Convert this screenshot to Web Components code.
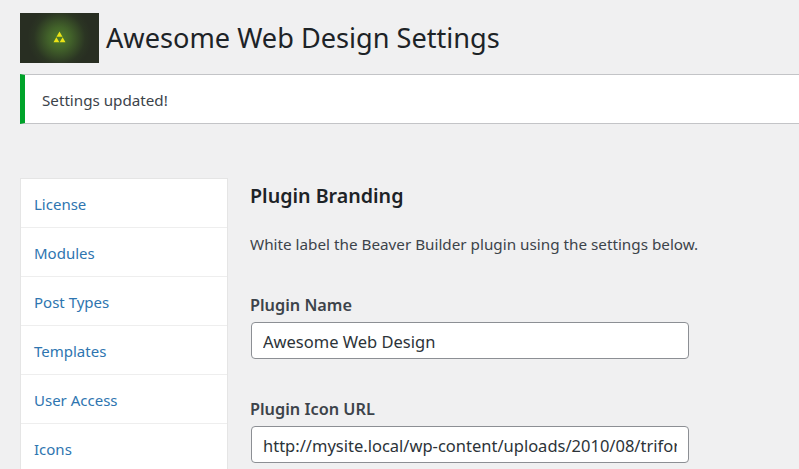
<!DOCTYPE html>
<html lang="en">
<head>
<meta charset="utf-8">
<title>Awesome Web Design Settings</title>
<style>
  html, body { margin: 0; height: 100%; overflow: hidden; }
  body {
    background: #f0f0f1;
    color: #3c434a;
    font-family: "Noto Sans", "Open Sans", sans-serif;
  }
</style>
</head>
<body>
<settings-page>
  <settings-header slot="header">Awesome Web Design Settings</settings-header>
  <settings-notice slot="notice">Settings updated!</settings-notice>
  <settings-nav slot="nav">
    <nav-item>License</nav-item>
    <nav-item>Modules</nav-item>
    <nav-item>Post Types</nav-item>
    <nav-item>Templates</nav-item>
    <nav-item>User Access</nav-item>
    <nav-item>Icons</nav-item>
  </settings-nav>
  <h3-block slot="main" heading="Plugin Branding">White label the Beaver Builder plugin using the settings below.</h3-block>
  <text-field slot="main" label="Plugin Name" value="Awesome Web Design"></text-field>
  <text-field slot="main" label="Plugin Icon URL" value="http://mysite.local/wp-content/uploads/2010/08/triforce.png"></text-field>
</settings-page>

<script>
(() => {
  // Small helper so each element just declares its own template
  const define = (name, html, Base = HTMLElement) => {
    const template = document.createElement('template');
    template.innerHTML = html;
    customElements.define(name, class extends Base {
      constructor() {
        super();
        this.attachShadow({ mode: 'open' });
        this.shadowRoot.appendChild(template.content.cloneNode(true));
      }
    });
  };

  define('settings-page', `
  <style>
    :host { display: block; padding-top: 13px; }
    .body {
      display: flex;
      align-items: flex-start;
      gap: 22px;
      margin: 54px 0 0 20px;
    }
    .main { width: 460px; flex: none; }
  </style>
  <slot name="header"></slot>
  <slot name="notice"></slot>
  <div class="body">
    <slot name="nav"></slot>
    <div class="main"><slot name="main"></slot></div>
  </div>
  `);

  define('settings-header', `
  <style>
    :host {
      display: flex;
      align-items: center;
      gap: 7px;
      height: 50px;
      margin-left: 20px;
      color: #1d2327;
      font-size: 27.15px;
      line-height: 50px;
    }
    svg { display: block; flex: none; }
  </style>
  <svg width="79" height="50" viewBox="0 0 79 50">
    <defs>
      <radialGradient id="glow" gradientUnits="userSpaceOnUse" cx="39.5" cy="25" r="32">
        <stop offset="0" stop-color="#4f7d2a"/>
        <stop offset=".35" stop-color="#42622a"/>
        <stop offset=".8" stop-color="#2b3523"/>
        <stop offset="1" stop-color="#282e22"/>
      </radialGradient>
    </defs>
    <rect width="79" height="50" fill="#282e22"/>
    <rect width="79" height="50" fill="url(#glow)"/>
    <path d="M39.5 18.5l3 5.2h-6zM36.4 24.2l2.9 5h-5.8zM42.6 24.2l2.9 5h-5.8z" fill="#ebe316"/>
  </svg>
  <slot></slot>
  `);

  define('settings-notice', `
  <style>
    :host {
      display: block;
      box-sizing: border-box;
      height: 50px;
      margin: 11px 0 0 20px;
      padding: 0 17px;
      background: #fff;
      border: 1px solid #c3c4c7;
      border-width: 1px 0 1px 5px;
      border-left-color: #00a32a;
      font-size: 15.2px;
      line-height: 50px;
    }
  </style>
  <slot></slot>
  `);

  define('settings-nav', `
  <style>
    :host {
      display: block;
      box-sizing: border-box;
      flex: none;
      width: 208px;
      background: #fff;
      border: 1px solid #e5e5e5;
    }
  </style>
  <slot></slot>
  `);

  define('nav-item', `
  <style>
    :host {
      display: block;
      height: 48px;
      padding-left: 13px;
      border-bottom: 1px solid #eee;
      color: #2e75b0;
      font-size: 15px;
      line-height: 50px;
    }
    :host(:last-child) { border-bottom: 0; }
  </style>
  <slot></slot>
  `);

  define('h3-block', `
  <style>
    :host { display: block; }
    h3 {
      margin: 0;
      color: #1d2327;
      font-size: 19.65px;
      font-weight: 600;
      line-height: 36px;
    }
    p {
      margin: 19px 0 0;
      font-size: 15.25px;
      line-height: 22px;
    }
  </style>
  <h3 id="heading"></h3>
  <p><slot></slot></p>
  `, class extends HTMLElement {
    connectedCallback() {
      this.shadowRoot.getElementById('heading').textContent = this.getAttribute('heading');
    }
  });

  define('text-field', `
  <style>
    :host { display: block; margin-top: 38px; }
    label {
      display: block;
      font-size: 16.3px;
      font-weight: 600;
      line-height: 24px;
      margin-bottom: 5px;
    }
    .input {
      box-sizing: border-box;
      width: 438px;
      height: 37px;
      margin-left: 1px;
      padding: 0 11px;
      background: #fff;
      border: 1px solid #8c8f94;
      border-radius: 4px;
      color: #2c3338;
      font-size: 16.5px;
      line-height: 37px;
    }
    .value { display: block; overflow: hidden; white-space: nowrap; }
  </style>
  <label id="label"></label>
  <div class="input"><span class="value" id="value"></span></div>
  `, class extends HTMLElement {
    connectedCallback() {
      this.shadowRoot.getElementById('label').textContent = this.getAttribute('label');
      this.shadowRoot.getElementById('value').textContent = this.getAttribute('value');
    }
  });
})();
</script>
</body>
</html>
